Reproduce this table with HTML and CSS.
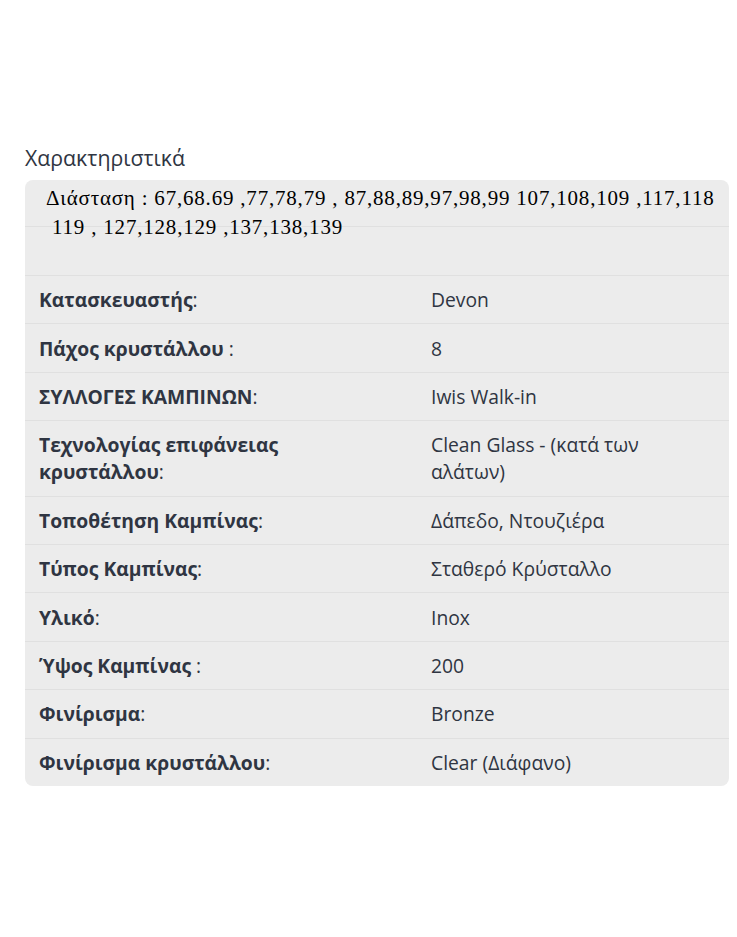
FILE: index.html
```html
<!DOCTYPE html>
<html lang="el">
<head>
    <meta charset="UTF-8">
    <meta name="viewport" content="width=device-width, initial-scale=1.0">
    <title>Χαρακτηριστικά</title>
    <link rel="stylesheet" href="styles.css">
</head>
<body>
    <div class="features">
        <h3 class="features-title">Χαρακτηριστικά</h3>
        <div class="specs">
            <div class="dim-row">
                <div class="dim-text">Διάσταση : 67,68.69 ,77,78,79 , 87,88,89,97,98,99 107,108,109 ,117,118<br>&nbsp;119 , 127,128,129 ,137,138,139</div>
            </div>
            <div class="spec-row">
                <div class="spec-label"><strong>Κατασκευαστής</strong>:</div>
                <div class="spec-value">Devon</div>
            </div>
            <div class="spec-row">
                <div class="spec-label"><strong>Πάχος κρυστάλλου</strong> :</div>
                <div class="spec-value">8</div>
            </div>
            <div class="spec-row">
                <div class="spec-label"><strong>ΣΥΛΛΟΓΕΣ ΚΑΜΠΙΝΩΝ</strong>:</div>
                <div class="spec-value">Iwis Walk-in</div>
            </div>
            <div class="spec-row">
                <div class="spec-label"><strong>Τεχνολογίας επιφάνειας κρυστάλλου</strong>:</div>
                <div class="spec-value">Clean Glass - (κατά των αλάτων)</div>
            </div>
            <div class="spec-row">
                <div class="spec-label"><strong>Τοποθέτηση Καμπίνας</strong>:</div>
                <div class="spec-value">Δάπεδο, Ντουζιέρα</div>
            </div>
            <div class="spec-row">
                <div class="spec-label"><strong>Τύπος Καμπίνας</strong>:</div>
                <div class="spec-value">Σταθερό Κρύσταλλο</div>
            </div>
            <div class="spec-row">
                <div class="spec-label"><strong>Υλικό</strong>:</div>
                <div class="spec-value">Inox</div>
            </div>
            <div class="spec-row">
                <div class="spec-label"><strong>Ύψος Καμπίνας</strong> :</div>
                <div class="spec-value">200</div>
            </div>
            <div class="spec-row">
                <div class="spec-label"><strong>Φινίρισμα</strong>:</div>
                <div class="spec-value">Bronze</div>
            </div>
            <div class="spec-row">
                <div class="spec-label"><strong>Φινίρισμα κρυστάλλου</strong>:</div>
                <div class="spec-value">Clear (Διάφανο)</div>
            </div>
        </div>
    </div>
</body>
</html>
```

FILE: styles.css
```css
body {
    margin: 0;
    background-color: #ffffff;
    font-family: 'Open Sans', sans-serif;
    color: #333333;
}

.features {
    padding: 143px 8px 0 25px;
}

.features-title {
    font-size: 21.3px;
    font-weight: normal;
    line-height: 29px;
    margin: 0 0 8px 0;
    color: #2f3542;
}

.specs {
    background-color: #ececec;
    border-radius: 8px;
    overflow: hidden;
}

/* premier bloc : texte collé depuis un autre éditeur */
.dim-row {
    height: 95px;
    border-bottom: 1px solid #e0e0e0;
}

.dim-text {
    height: 47px;
    border-bottom: 1px solid #e0e0e0;
    padding: 4px 0 0 21px;
    box-sizing: border-box;
    font-family: 'Liberation Serif', serif;
    font-size: 21px;
    letter-spacing: 0.8px;
    line-height: 29px;
    color: #000000;
}

.spec-row {
    display: grid;
    grid-template-columns: 392px 1fr;
    border-bottom: 1px solid #e0e0e0;
    font-size: 19.3px;
    line-height: 27px;
    color: #2f3542;
}

.spec-row:last-child {
    border-bottom: none;
}

.spec-label,
.spec-value {
    padding: 10.25px 14px 10.15px;
}

.spec-value {
    padding-right: 24px;
}

.spec-label strong {
    font-weight: bold;
}
```
